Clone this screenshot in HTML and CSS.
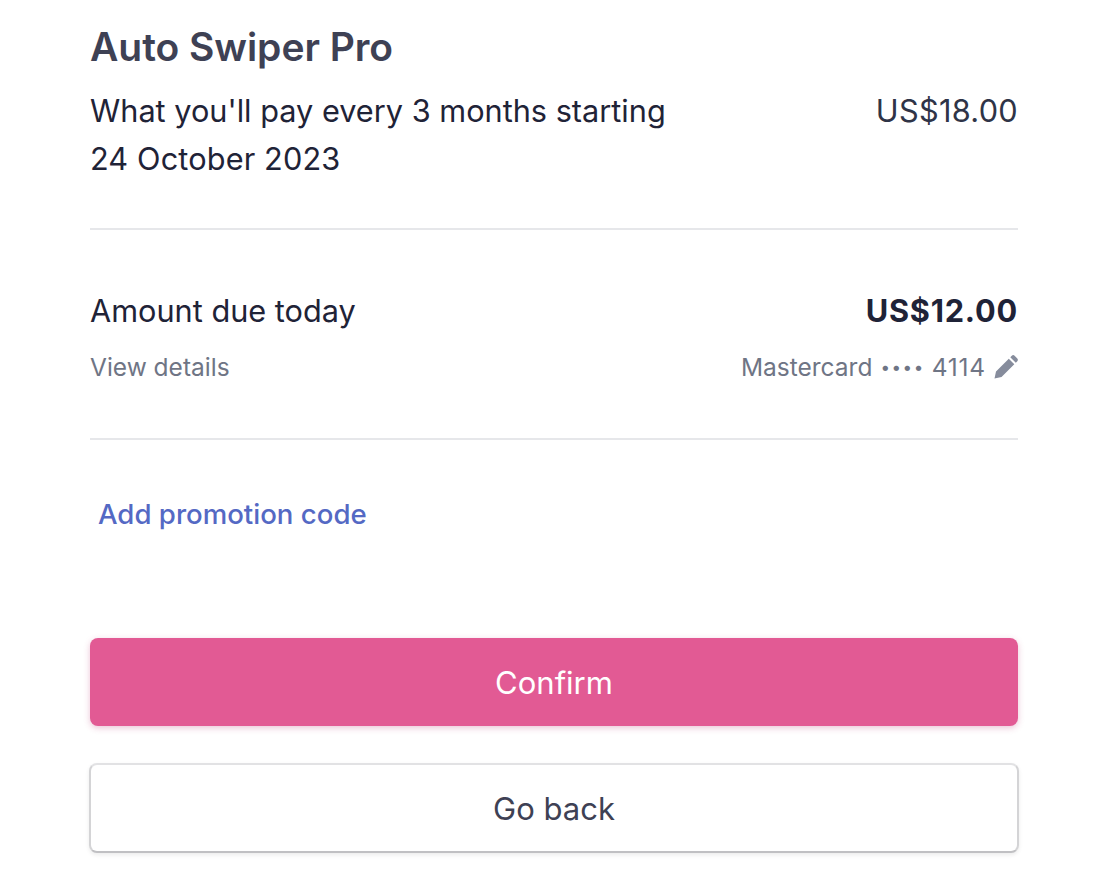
FILE: index.html
```html
<!DOCTYPE html>
<html lang="en">
<head>
<meta charset="utf-8">
<title>Auto Swiper Pro</title>
<link rel="stylesheet" href="styles.css">
</head>
<body>
<main class="page">
  <h1 class="title">Auto Swiper Pro</h1>
  <section class="row plan">
    <p class="plan-text">What you'll pay every 3 months starting<br><span class="date">24 October 2023</span></p>
    <p class="plan-price">US$18.00</p>
  </section>
  <section class="due">
    <div class="row due-main">
      <span>Amount due today</span>
      <strong class="due-price">US$12.00</strong>
    </div>
    <div class="row due-sub">
      <a class="details">View details</a>
      <span class="card">
        <span>Mastercard</span>
        <span class="dots">••••</span>
        <span class="last4">4114</span>
        <svg class="pencil" viewBox="0 0 24 24" aria-hidden="true"><path d="M0.500 23.500L2 16.500L14.800 3.700L20.300 9.200L7.500 22zM16.300 2.200L17.800 .700C18.600 -.100 19.800 -.100 20.600 .700L23.300 3.400C24.100 4.200 24.100 5.400 23.300 6.200L21.800 7.700z"/></svg>
      </span>
    </div>
  </section>
  <a class="promo">Add promotion code</a>
  <div class="actions">
    <button class="btn primary">Confirm</button>
    <button class="btn secondary">Go back</button>
  </div>
</main>
</body>
</html>
```
FILE: styles.css
```css
* { box-sizing: border-box; }
html, body { margin: 0; padding: 0; background: #fff; }
body { font-family: Inter, "Liberation Sans", sans-serif; color: #1f2337; }
.page { width: 1112px; height: 889px; padding: 24px 94px 0 90px; overflow: hidden; }
.title { margin: 0; font-size: 39px; line-height: 46px; font-weight: 600; color: #3e4154; letter-spacing: -0.05px; }
.row { display: flex; justify-content: space-between; }
.plan { margin-top: 17px; border-bottom: 2px solid #e6e7ea; height: 143px; font-size: 30.700px; line-height: 48px; }
.plan-text, .plan-price { margin: 0; }
.date { letter-spacing: 0.130px; }
.plan-price { color: #2f3447; letter-spacing: 0.300px; }
.due { height: 210px; border-bottom: 2px solid #e6e7ea; padding-top: 57px; }
.due-main { font-size: 30.700px; line-height: 48px; }
.due-price { font-weight: 700; letter-spacing: 0.800px; }
.due-sub { margin-top: 12px; font-size: 24.500px; line-height: 40px; color: #6f7585; }
.card { display: flex; align-items: center; gap: 10px; }
.dots { font-size: 17px; letter-spacing: 1.500px; margin-left: -2px; }
.last4 { letter-spacing: 0.800px; margin-left: -3px; }
.pencil { width: 24px; height: 24px; fill: #868c9c; margin-left: -2px; }
.promo { display: block; margin: 52px 0 0 8px; font-size: 27.600px; line-height: 44px; font-weight: 500; color: #5469c4; }
.actions { margin-top: 102px; display: flex; flex-direction: column; gap: 37px; }
.btn { display: block; height: 88px; border-radius: 8px; font: inherit; font-size: 31px; font-weight: 400; }
.primary { border: 0; background: #e25a94; color: #fff; box-shadow: 0 2px 6px rgba(190, 60, 120, .3); }
.secondary { margin: 0 -1px; height: 90px; background: #fff; color: #3e4154; border: 2px solid #d4d4d6; border-top-color: #e2e2e4; border-bottom-color: #c0c0c3; box-shadow: 0 2px 4px rgba(0, 0, 0, .08); }
```
